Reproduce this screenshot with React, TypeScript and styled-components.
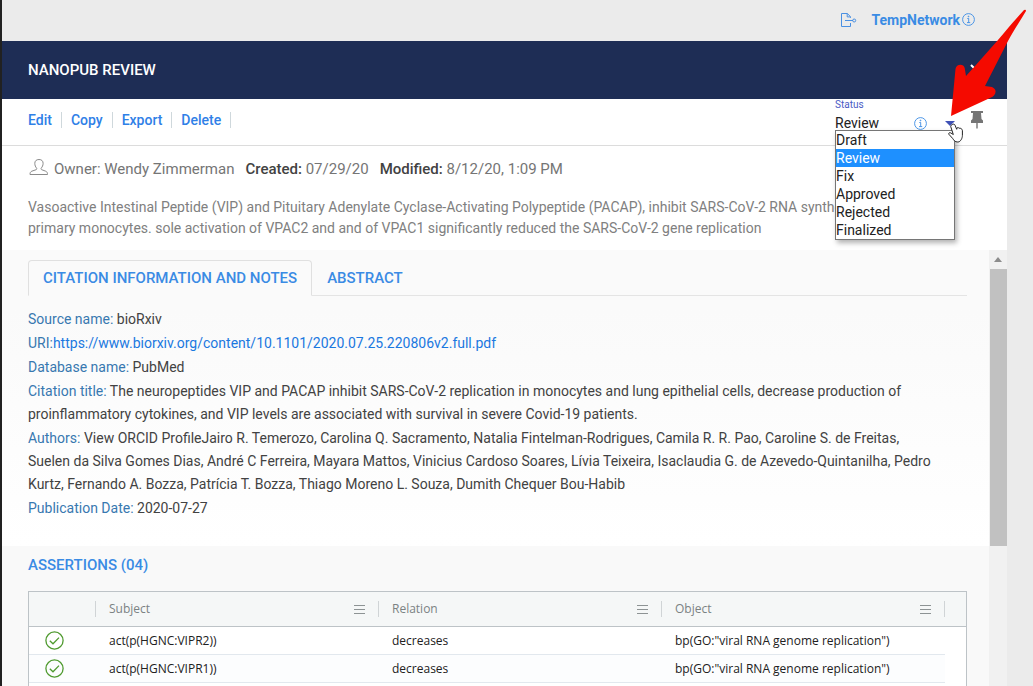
import React from "react";
import styled, { createGlobalStyle, css } from "styled-components";

const GlobalStyle = createGlobalStyle`
  *, *::before, *::after { box-sizing: border-box; }
  html, body, #root { height: 100%; }
  body {
    margin: 0;
    background: #ebebeb;
    color: #424242;
    font: 15px/23px Roboto, "Liberation Sans", sans-serif;
    overflow: hidden;
  }
`;

const Page = styled.div`
  display: flex;
  flex-direction: column;
  height: 100%;
  min-height: 0;
  padding-right: 26px;
  border-left: 2px solid #212121;
`;

const TopBar = styled.header`
  display: flex;
  flex: none;
  align-items: center;
  justify-content: flex-end;
  height: 41px;
  padding: 0 32px 2px 0;
`;

const IconButton = styled.button<{ $gap?: number }>`
  display: flex;
  padding: 0;
  margin-right: ${({ $gap = 0 }) => $gap}px;
  border: 0;
  background: none;
  color: #4a90e2;
`;

const NetworkLink = styled.a`
  margin-right: 2px;
  color: #3a8be4;
  font-size: 14px;
  font-weight: 700;
  line-height: 24px;
  text-decoration: none;
`;

const TitleBar = styled.div`
  display: flex;
  flex: none;
  align-items: center;
  justify-content: space-between;
  height: 58px;
  padding: 0 24px 0 26px;
  background: #1e2d55;
  color: #fff;
`;

const Title = styled.h1`
  margin: 0;
  font-size: 15px;
  font-weight: 500;
`;

const Toolbar = styled.div`
  display: flex;
  flex: none;
  justify-content: space-between;
  height: 47px;
  padding: 0 24px 0 26px;
  border-bottom: 1px solid #dcdcdc;
  background: #fff;
`;

const Actions = styled.nav`
  display: flex;
  align-items: center;
  height: 42px;
`;

const Action = styled.button`
  height: 16px;
  margin-right: 9px;
  padding: 0 9px 0 0;
  border: 0;
  border-right: 1px solid #cfd8dc;
  background: none;
  color: #2f80e7;
  font: 500 14px/16px Roboto, sans-serif;
`;

const StatusArea = styled.div`
  display: flex;
  align-items: flex-start;
  gap: 16px;
`;

const Field = styled.div`
  position: relative;
  display: flex;
  flex-direction: column;
  width: 120px;
`;

const FieldLabel = styled.label`
  color: #4a5bc4;
  font-size: 10px;
  line-height: 12px;
`;

const FieldRow = styled.div`
  display: flex;
  align-items: center;
  height: 20px;
  margin-top: 2px;
  color: #3f51b5;
`;

const StatusSelect = styled.select`
  flex: 1;
  min-width: 0;
  padding: 0;
  border: 0;
  appearance: none;
  background: none;
  color: #212121;
  font: 14px/20px Roboto, sans-serif;
`;

const Menu = styled.ul`
  position: absolute;
  z-index: 1;
  top: 31px;
  left: 0;
  width: 120px;
  margin: 0;
  padding: 0;
  border: 1px solid #767676;
  background: #fff;
  box-shadow: 2px 3px 5px rgba(0, 0, 0, 0.3);
  color: #212121;
  font-size: 14px;
  line-height: 18px;
  list-style: none;
`;

const MenuItem = styled.li<{ $selected: boolean }>`
  ${({ $selected }) => $selected && css`
    background: #1e90ff;
    color: #fff;
  `}
`;

const Summary = styled.section`
  flex: none;
  padding: 11px 48px 11px 26px;
  background: #fff;
  color: #757575;
`;

const Meta = styled.div`
  display: flex;
  align-items: center;
  gap: 11px;
  height: 24px;
`;

const Owner = styled.span`
  display: flex;
  align-items: center;
  gap: 6px;
`;

const Strong = styled.b`
  color: #424242;
  font-weight: 500;
`;

const Description = styled.p`
  margin: 16px 0 0;
  color: #808080;
  font-size: 14px;
  line-height: 21px;
`;

const ScrollArea = styled.div`
  display: flex;
  flex: 1;
  min-height: 0;
  overflow: hidden;
`;

const Content = styled.main`
  flex: 1;
  min-width: 0;
  background: #fafafa;
`;

const Citation = styled.section`
  height: 296px;
  padding: 10px 22px 0 26px;
  background: linear-gradient(#fafafa 20%, #fff);
`;

const Tabs = styled.div`
  display: flex;
  height: 36px;
  border-bottom: 1px solid #e4e4e4;
`;

const Tab = styled.button<{ $active?: boolean }>`
  height: 36px;
  padding: 0 14px;
  border: 1px solid transparent;
  background: none;
  color: #3a8be4;
  font: 500 15px/20px Roboto, sans-serif;
  ${({ $active }) => $active && css`
    border-color: #e0e0e0;
    border-bottom-color: #fafafa;
    border-radius: 4px 4px 0 0;
    background: #fafafa;
  `}
`;

const Details = styled.div`
  padding: 12px 24px 0 0;
  font-size: 14px;
`;

const Detail = styled.p`
  margin: 0 0 1px;
`;

const Key = styled.span`
  color: #3878b0;
`;

const Uri = styled.a`
  color: #1a78e0;
  text-decoration: none;
`;

const Assertions = styled.section`
  padding: 8px 22px 0 26px;
  background: #f9f9f9;
`;

const Heading = styled.h2`
  margin: 0 0 15px;
  color: #3a8be4;
  font-size: 15px;
  font-weight: 500;
  line-height: 22px;
`;

const Grid = styled.div`
  border: 1px solid #bdc3c7;
  background: #fff;
`;

const Table = styled.table`
  width: 100%;
  border-collapse: separate;
  border-spacing: 0;
  table-layout: fixed;
  color: #212121;
  font: 12px/20px "Open Sans", "Noto Sans", sans-serif;
`;

const HeadCell = styled.th`
  height: 35px;
  padding: 0;
  border-bottom: 1px solid #bdc3c7;
  background: #f5f7f7;
  color: #7b8283;
  font-weight: 400;
  text-align: left;
`;

const HeadLabel = styled.div<{ $last?: boolean }>`
  display: flex;
  align-items: center;
  justify-content: space-between;
  height: 16px;
  padding: 0 13px 0 13px;
  border-right: ${({ $last }) => ($last ? "0" : "1px solid #d0d4d6")};
`;

const Row = styled.tr<{ $odd: boolean }>`
  background: ${({ $odd }) => ($odd ? "#fcfdfe" : "#fff")};
`;

const Cell = styled.td`
  height: 28px;
  padding: 0 13px;
  border-bottom: 1px solid #e2e8ee;
  white-space: nowrap;
`;

const CheckCell = styled(Cell)`
  padding: 0 16px;
  color: #4f9a2f;
`;

const EndCell = styled.td`
  background: #fff;
`;

const ScrollTrack = styled.div`
  display: flex;
  flex-direction: column;
  align-items: center;
  width: 18px;
  background: #f1f1f1;
`;

const ScrollArrow = styled.div`
  display: flex;
  align-items: center;
  justify-content: center;
  height: 19px;
`;

const ScrollThumb = styled.div`
  width: 17px;
  height: 277px;
  background: #c1c1c1;
`;

const Block = styled.svg`
  display: block;
  flex: none;
`;

const Annotation = styled.svg`
  position: absolute;
  z-index: 3;
  top: 0;
  right: 0;
  pointer-events: none;
`;

const InfoIcon = () => (
  <Block width="13" height="13" viewBox="0 0 13 13" fill="none" stroke="#3a8be4">
    <circle cx="6.5" cy="6.5" r="5.9" strokeWidth="0.9" />
    <path d="M5.3 5.5h1.4v4M5 9.6h3.2" strokeWidth="0.9" />
    <circle cx="6.5" cy="3.5" r="0.4" />
  </Block>
);

const ExportIcon = () => (
  <Block width="17" height="16" viewBox="0 0 17 16" fill="none" stroke="currentColor">
    <path d="M10.5 5.8V4.7L7.3 1.5H1.5v13h9v-3.5M7.2 1.6v3.3h3.3" />
    <path d="M5 8.5h8" />
    <circle cx="14.2" cy="8.5" r="1.5" />
  </Block>
);

const PersonIcon = () => (
  <Block width="20" height="22" viewBox="0 0 20 22" fill="none" stroke="#8a8a8a">
    <path d="M11 1.500c-2.700 0-4.200 1.500-4.200 3.900 0 1.900.8 3.700 1.700 4.600.5.600.3 1.400-.4 1.700L3.800 13.200c-1.300.5-1.800 1.500-1.800 3.300h17.500c0-1.800-.5-2.800-1.800-3.300l-4-1.500c-.7-.3-.9-1.100-.4-1.700.9-.9 1.800-2.700 1.800-4.600 0-2.400-1.400-3.900-4.100-3.900z" />
  </Block>
);

const PinIcon = () => (
  <Block width="12" height="18" viewBox="0 0 12 18" fill="#757575">
    <path d="M0 0h12v2H10l.5 6 1.500 1.500V12H6.700v5L6 18l-.7-1v-5H0V9.500L1.500 8 2 2H0z" />
  </Block>
);

const MenuIcon = () => (
  <Block width="11" height="9" viewBox="0 0 11 9" stroke="#8d9394">
    <path d="M0 .5h11M0 4.500h11M0 8.500h11" />
  </Block>
);

const CheckIcon = () => (
  <Block width="19" height="19" viewBox="0 0 19 19" fill="none" stroke="currentColor" strokeWidth="1.3">
    <circle cx="9.500" cy="9.500" r="8.600" />
    <path d="M4.800 9.800l3.200 3 6-6.200" />
  </Block>
);

const statuses = ["Draft", "Review", "Fix", "Approved", "Rejected", "Finalized"];

const rows = [
  ["act(p(HGNC:VIPR2))", "decreases", 'bp(GO:"viral RNA genome replication")'],
  ["act(p(HGNC:VIPR1))", "decreases", 'bp(GO:"viral RNA genome replication")'],
  ["", "", ""],
];

export default function App() {
  const [status, setStatus] = React.useState("Review");
  return (
    <>
      <GlobalStyle />
      <Page>
        <TopBar>
          <IconButton aria-label="Export" $gap={14}><ExportIcon /></IconButton>
          <NetworkLink href="#network">TempNetwork</NetworkLink>
          <IconButton aria-label="Network information"><InfoIcon /></IconButton>
        </TopBar>

        <TitleBar>
          <Title>NANOPUB REVIEW</Title>
          <IconButton aria-label="Close">
            <Block width="13" height="13" viewBox="0 0 13 13" stroke="#fff" strokeWidth="2">
              <path d="M1 1l11 11M12 1l-11 11" />
            </Block>
          </IconButton>
        </TitleBar>

        <Toolbar>
          <Actions>
            {["Edit", "Copy", "Export", "Delete"].map((name) => (
              <Action key={name}>{name}</Action>
            ))}
          </Actions>
          <StatusArea>
            <Field>
              <FieldLabel htmlFor="status">Status</FieldLabel>
              <FieldRow>
                <StatusSelect id="status" value={status} onChange={(e) => setStatus(e.target.value)}>
                  {statuses.map((s) => <option key={s}>{s}</option>)}
                </StatusSelect>
                <IconButton aria-label="Status information" $gap={18}><InfoIcon /></IconButton>
                <Block width="10" height="5" viewBox="0 0 10 5" fill="currentColor">
                  <path d="M0 0h10L5 5z" />
                </Block>
              </FieldRow>
              <Menu>
                {statuses.map((s) => (
                  <MenuItem key={s} $selected={s === status}>{s}</MenuItem>
                ))}
              </Menu>
            </Field>
            <PinButton aria-label="Pin"><PinIcon /></PinButton>
          </StatusArea>
        </Toolbar>

        <Summary>
          <Meta>
            <Owner><PersonIcon />Owner: Wendy Zimmerman</Owner>
            <span><Strong>Created:</Strong> 07/29/20</span>
            <span><Strong>Modified:</Strong> 8/12/20, 1:09 PM</span>
          </Meta>
          <Description>
            Vasoactive Intestinal Peptide (VIP) and Pituitary Adenylate Cyclase-Activating Polypeptide (PACAP),
            inhibit SARS-CoV-2 RNA synthesis in human primary monocytes. sole activation of VPAC2 and and of VPAC1
            significantly reduced the SARS-CoV-2 gene replication
          </Description>
        </Summary>

        <ScrollArea>
          <Content>
            <Citation>
              <Tabs role="tablist">
                <Tab role="tab" aria-selected $active>CITATION INFORMATION AND NOTES</Tab>
                <Tab role="tab" aria-selected={false}>ABSTRACT</Tab>
              </Tabs>
              <Details>
                <Detail><Key>Source name:</Key> bioRxiv</Detail>
                <Detail>
                  <Key>URI:</Key>
                  <Uri href="https://www.biorxiv.org/content/10.1101/2020.07.25.220806v2.full.pdf">
                    https://www.biorxiv.org/content/10.1101/2020.07.25.220806v2.full.pdf
                  </Uri>
                </Detail>
                <Detail><Key>Database name:</Key> PubMed</Detail>
                <Detail>
                  <Key>Citation title:</Key> The neuropeptides VIP and PACAP inhibit SARS-CoV-2 replication in monocytes
                  and lung epithelial cells, decrease production of proinflammatory cytokines, and VIP levels are
                  associated with survival in severe Covid-19 patients.
                </Detail>
                <Detail>
                  <Key>Authors:</Key> View ORCID ProfileJairo R. Temerozo, Carolina Q. Sacramento, Natalia
                  Fintelman-Rodrigues, Camila R. R. Pao, Caroline S. de Freitas, Suelen da Silva Gomes Dias, André C
                  Ferreira, Mayara Mattos, Vinicius Cardoso Soares, Lívia Teixeira, Isaclaudia G. de
                  Azevedo-Quintanilha, Pedro Kurtz, Fernando A. Bozza, Patrícia T. Bozza, Thiago Moreno L. Souza,
                  Dumith Chequer Bou-Habib
                </Detail>
                <Detail><Key>Publication Date:</Key> 2020-07-27</Detail>
              </Details>
            </Citation>

            <Assertions>
              <Heading>ASSERTIONS (04)</Heading>
              <Grid>
                <Table>
                  <colgroup>
                    <col style={{ width: 67 }} />
                    <col />
                    <col />
                    <col />
                    <col style={{ width: 21 }} />
                  </colgroup>
                  <thead>
                    <tr>
                      <HeadCell aria-label="Validated"><HeadLabel /></HeadCell>
                      {["Subject", "Relation", "Object"].map((h) => (
                        <HeadCell key={h}><HeadLabel>{h}<MenuIcon /></HeadLabel></HeadCell>
                      ))}
                      <HeadCell><HeadLabel $last /></HeadCell>
                    </tr>
                  </thead>
                  <tbody>
                    {rows.map(([subject, relation, object], i) => (
                      <Row key={i} $odd={i % 2 === 1}>
                        <CheckCell>{subject && <CheckIcon />}</CheckCell>
                        <Cell>{subject}</Cell>
                        <Cell>{relation}</Cell>
                        <Cell>{object}</Cell>
                        <EndCell />
                      </Row>
                    ))}
                  </tbody>
                </Table>
              </Grid>
            </Assertions>
          </Content>
          <ScrollTrack>
            <ScrollArrow>
              <Block width="8" height="5" viewBox="0 0 8 5" fill="#8c8c8c"><path d="M0 5l4-5 4 5z" /></Block>
            </ScrollArrow>
            <ScrollThumb />
          </ScrollTrack>
        </ScrollArea>
      </Page>

      <Annotation width="93" height="146" viewBox="940 0 93 146">
        <path
          d="M952.500 124.500c1-.8 2.200-.2 2.600.8l1.600 4 .3-1.300c.8-.8 1.800-.5 2.100.4.800-.6 1.800-.2 2 .600 1 0 1.300.700 1.300 1.700v4.800c0 2.500-1.700 6.500-4.600 6.500-3 0-3.700-1.600-5.200-3.600l-3.800-4.200c-.4-1.200.9-2 1.900-1.300l2.600 1.600-2.600-8c-.2-.8.900-1.600 1.800-2z"
          fill="#fff"
          stroke="#222"
        />
        <path
          d="M951 116L955.500 69C956 64 963.500 63 964.700 68L966 76L975 66L998 40C1007 29 1015 20 1024 10Q1026 9 1026 11C1020 21 1014 30 1008 41L985 86L992 87Q998 90 994 95.500Q993 96.500 990 98Z"
          fill="#f50a00"
        />
      </Annotation>
    </>
  );
}

const PinButton = styled(IconButton)`
  margin-top: 12px;
`;
